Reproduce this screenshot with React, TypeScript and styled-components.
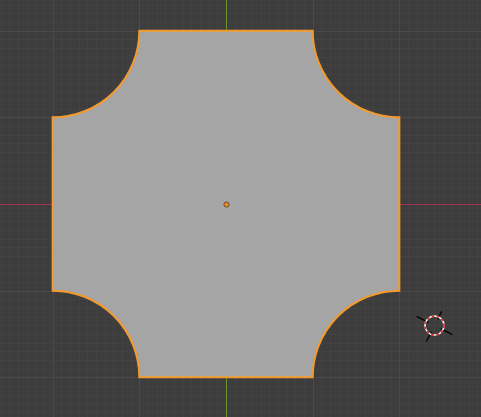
import React from "react";
import styled, { createGlobalStyle } from "styled-components";

const Global = createGlobalStyle`
  html, body { margin: 0; padding: 0; background: #3d3d3d; overflow: hidden; }
  #root { width: 481px; height: 417px; }
`;

const Viewport = styled.div`
  width: 481px;
  height: 417px;
  background: #3d3d3d;
  display: block;
  overflow: hidden;
`;

const Canvas = styled.svg`
  display: block;
  width: 100%;
  height: 100%;
`;

const W = 481;
const H = 417;
const CX = 226;
const CY = 204;
const STEP = 86.67;
const MINOR = STEP / 10;

function gridLines() {
  const out: React.ReactNode[] = [];
  for (let i = -40; i <= 40; i++) {
    const x = Math.round(CX + i * MINOR) + 0.5;
    const y = Math.round(CY + i * MINOR) + 0.5;
    const major = i % 10 === 0;
    if (i === 0) continue;
    const col = major ? "#4a4a4a" : "#424242";
    if (x > 0 && x < W) out.push(<line key={"v" + i} x1={x} y1={0} x2={x} y2={H} stroke={col} strokeWidth={1} />);
    if (y > 0 && y < H) out.push(<line key={"h" + i} x1={0} y1={y} x2={W} y2={y} stroke={col} strokeWidth={1} />);
  }
  return out;
}

const L = CX - 2 * STEP;
const R = CX + 2 * STEP;
const T = CY - 2 * STEP;
const B = CY + 2 * STEP;
const r = STEP;

const shapePath = [
  `M ${L + r} ${T}`,
  `L ${R - r} ${T}`,
  `A ${r} ${r} 0 0 0 ${R} ${T + r}`,
  `L ${R} ${B - r}`,
  `A ${r} ${r} 0 0 0 ${R - r} ${B}`,
  `L ${L + r} ${B}`,
  `A ${r} ${r} 0 0 0 ${L} ${B - r}`,
  `L ${L} ${T + r}`,
  `A ${r} ${r} 0 0 0 ${L + r} ${T}`,
  "Z",
].join(" ");

function Cursor3D({ x, y }: { x: number; y: number }) {
  const a = (27 * Math.PI) / 180;
  const c = Math.cos(a);
  const s = Math.sin(a);
  const seg = (dx: number, dy: number, r1: number, r2: number, k: string) => (
    <line key={k} x1={x + dx * r1} y1={y + dy * r1} x2={x + dx * r2} y2={y + dy * r2} stroke="#000" strokeWidth={1.3} />
  );
  return (
    <g>
      {seg(-c, -s, 7, 20, "a")}
      {seg(c, s, 7, 20, "b")}
      {seg(s, -c, 7, 16, "c")}
      {seg(-s, c, 7, 18, "d")}
      <circle cx={x} cy={y} r={9.5} fill="none" stroke="#ffffff" strokeWidth={1.6} />
      <circle cx={x} cy={y} r={9.5} fill="none" stroke="#e02020" strokeWidth={1.6} strokeDasharray="2.6 2.6" />
    </g>
  );
}

export default function App() {
  return (
    <>
      <Global />
      <Viewport>
        <Canvas viewBox={`0 0 ${W} ${H}`}>
          <g shapeRendering="crispEdges">
            {gridLines()}
            <line x1={0} y1={CY + 0.5} x2={W} y2={CY + 0.5} stroke="#a8304c" strokeWidth={1.4} />
            <line x1={CX + 0.5} y1={0} x2={CX + 0.5} y2={H} stroke="#6b9325" strokeWidth={1.4} />
          </g>
          <path d={shapePath} fill="#a5a5a5" stroke="#f39a2e" strokeWidth={2} />
          <circle cx={CX + 0.5} cy={CY + 0.5} r={2.6} fill="#f08a20" stroke="#4a3a2a" strokeWidth={0.8} />
          <Cursor3D x={434.5} y={325.5} />
        </Canvas>
      </Viewport>
    </>
  );
}
